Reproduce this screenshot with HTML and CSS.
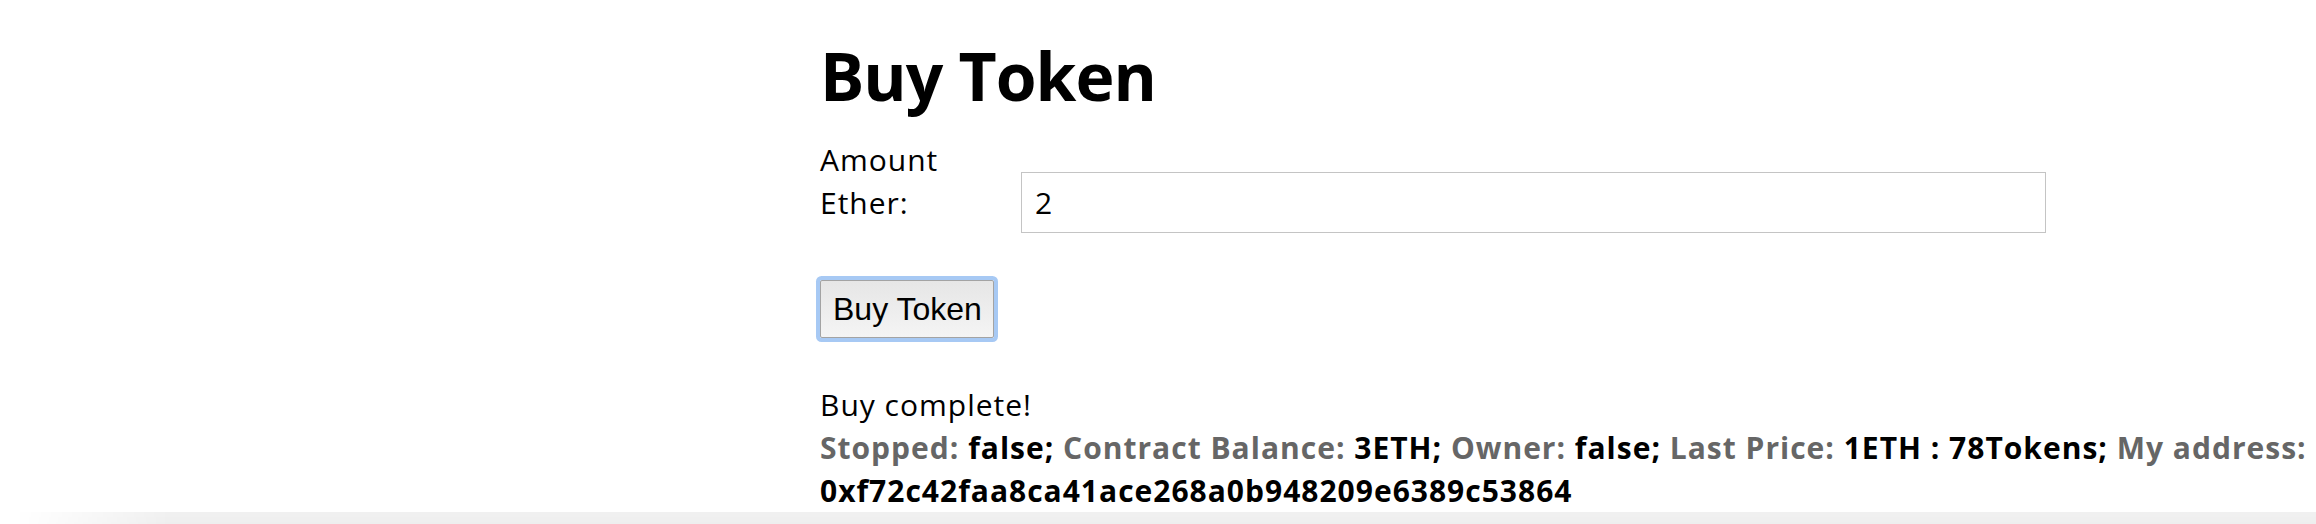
FILE: index.html
```html
<!DOCTYPE html>
<html lang="en">
<head>
<meta charset="utf-8">
<title>Buy Token</title>
<link rel="stylesheet" href="styles.css">
</head>
<body>
<main class="page">
  <h1 class="title">Buy Token</h1>
  <form class="buy-form">
    <div class="field">
      <label class="field-label" for="amount">Amount Ether:</label>
      <input class="field-input" id="amount" type="text" value="2">
    </div>
    <button class="buy-btn" type="button">Buy Token</button>
  </form>
  <div class="status">
    <p class="status-msg">Buy complete!</p>
    <p class="status-info"><span class="k">Stopped:</span> <span class="v">false;</span> <span class="k">Contract Balance:</span> <span class="v">3ETH;</span> <span class="k">Owner:</span> <span class="v">false;</span> <span class="k">Last Price:</span> <span class="v">1ETH : 78Tokens;</span> <span class="k">My address:</span> <span class="v">0xf72c42faa8ca41ace268a0b948209e6389c53864</span></p>
  </div>
</main>
<div class="window-shadow"></div>
</body>
</html>
```

FILE: styles.css
```css
html, body {
  background: #ffffff;
}

body {
  margin: 0;
  overflow: hidden;
  font-family: "Open Sans", "DejaVu Sans", sans-serif;
  font-size: 30px;
  line-height: 43px;
  letter-spacing: 1px;
  color: #000;
}

.page {
  padding: 0 0 0 820px;
}

.title {
  margin: 39px 0 27px;
  font-size: 66px;
  line-height: 72px;
  font-weight: 700;
  letter-spacing: -1px;
}

.field {
  display: grid;
  grid-template-columns: 201px 1025px;
  align-items: start;
}

.field-label {
  padding-right: 40px;
}

.field-input {
  box-sizing: border-box;
  margin-top: 34px;
  height: 61px;
  width: 1025px;
  padding: 0 13px;
  border: 1px solid #c4c4c4;
  border-radius: 0;
  background: #fff;
  font-family: "Open Sans", "DejaVu Sans", sans-serif;
  font-size: 30px;
  color: #000;
  outline: none;
}

.buy-btn {
  display: block;
  margin-top: 47px;
  padding: 10px 11px 9px 12px;
  border: 1px solid #a3a3a3;
  border-radius: 2px;
  background: linear-gradient(#e6e6e6, #f4f4f4);
  box-shadow: 0 0 0 4px #a7c9f4;
  font-family: "Liberation Sans", Arial, sans-serif;
  font-size: 32px;
  line-height: 37px;
  letter-spacing: 0;
  color: #000;
}

.status {
  margin-top: 45px;
}

.status p {
  margin: 0;
}

.status-info {
  font-weight: 700;
}

.status-info .k {
  color: #666666;
}

.status-info .v {
  color: #000;
}

.window-shadow {
  position: fixed;
  left: 0;
  right: 0;
  bottom: 0;
  height: 95px;
  z-index: -1;
  background: linear-gradient(rgba(0, 0, 0, 0) 0%, rgba(0, 0, 0, 0.02) 35%, rgba(0, 0, 0, 0.045) 70%, rgba(0, 0, 0, 0.065) 100%);
  -webkit-mask-image: linear-gradient(to right, transparent 15px, #000 170px);
  mask-image: linear-gradient(to right, transparent 15px, #000 170px);
}
```
